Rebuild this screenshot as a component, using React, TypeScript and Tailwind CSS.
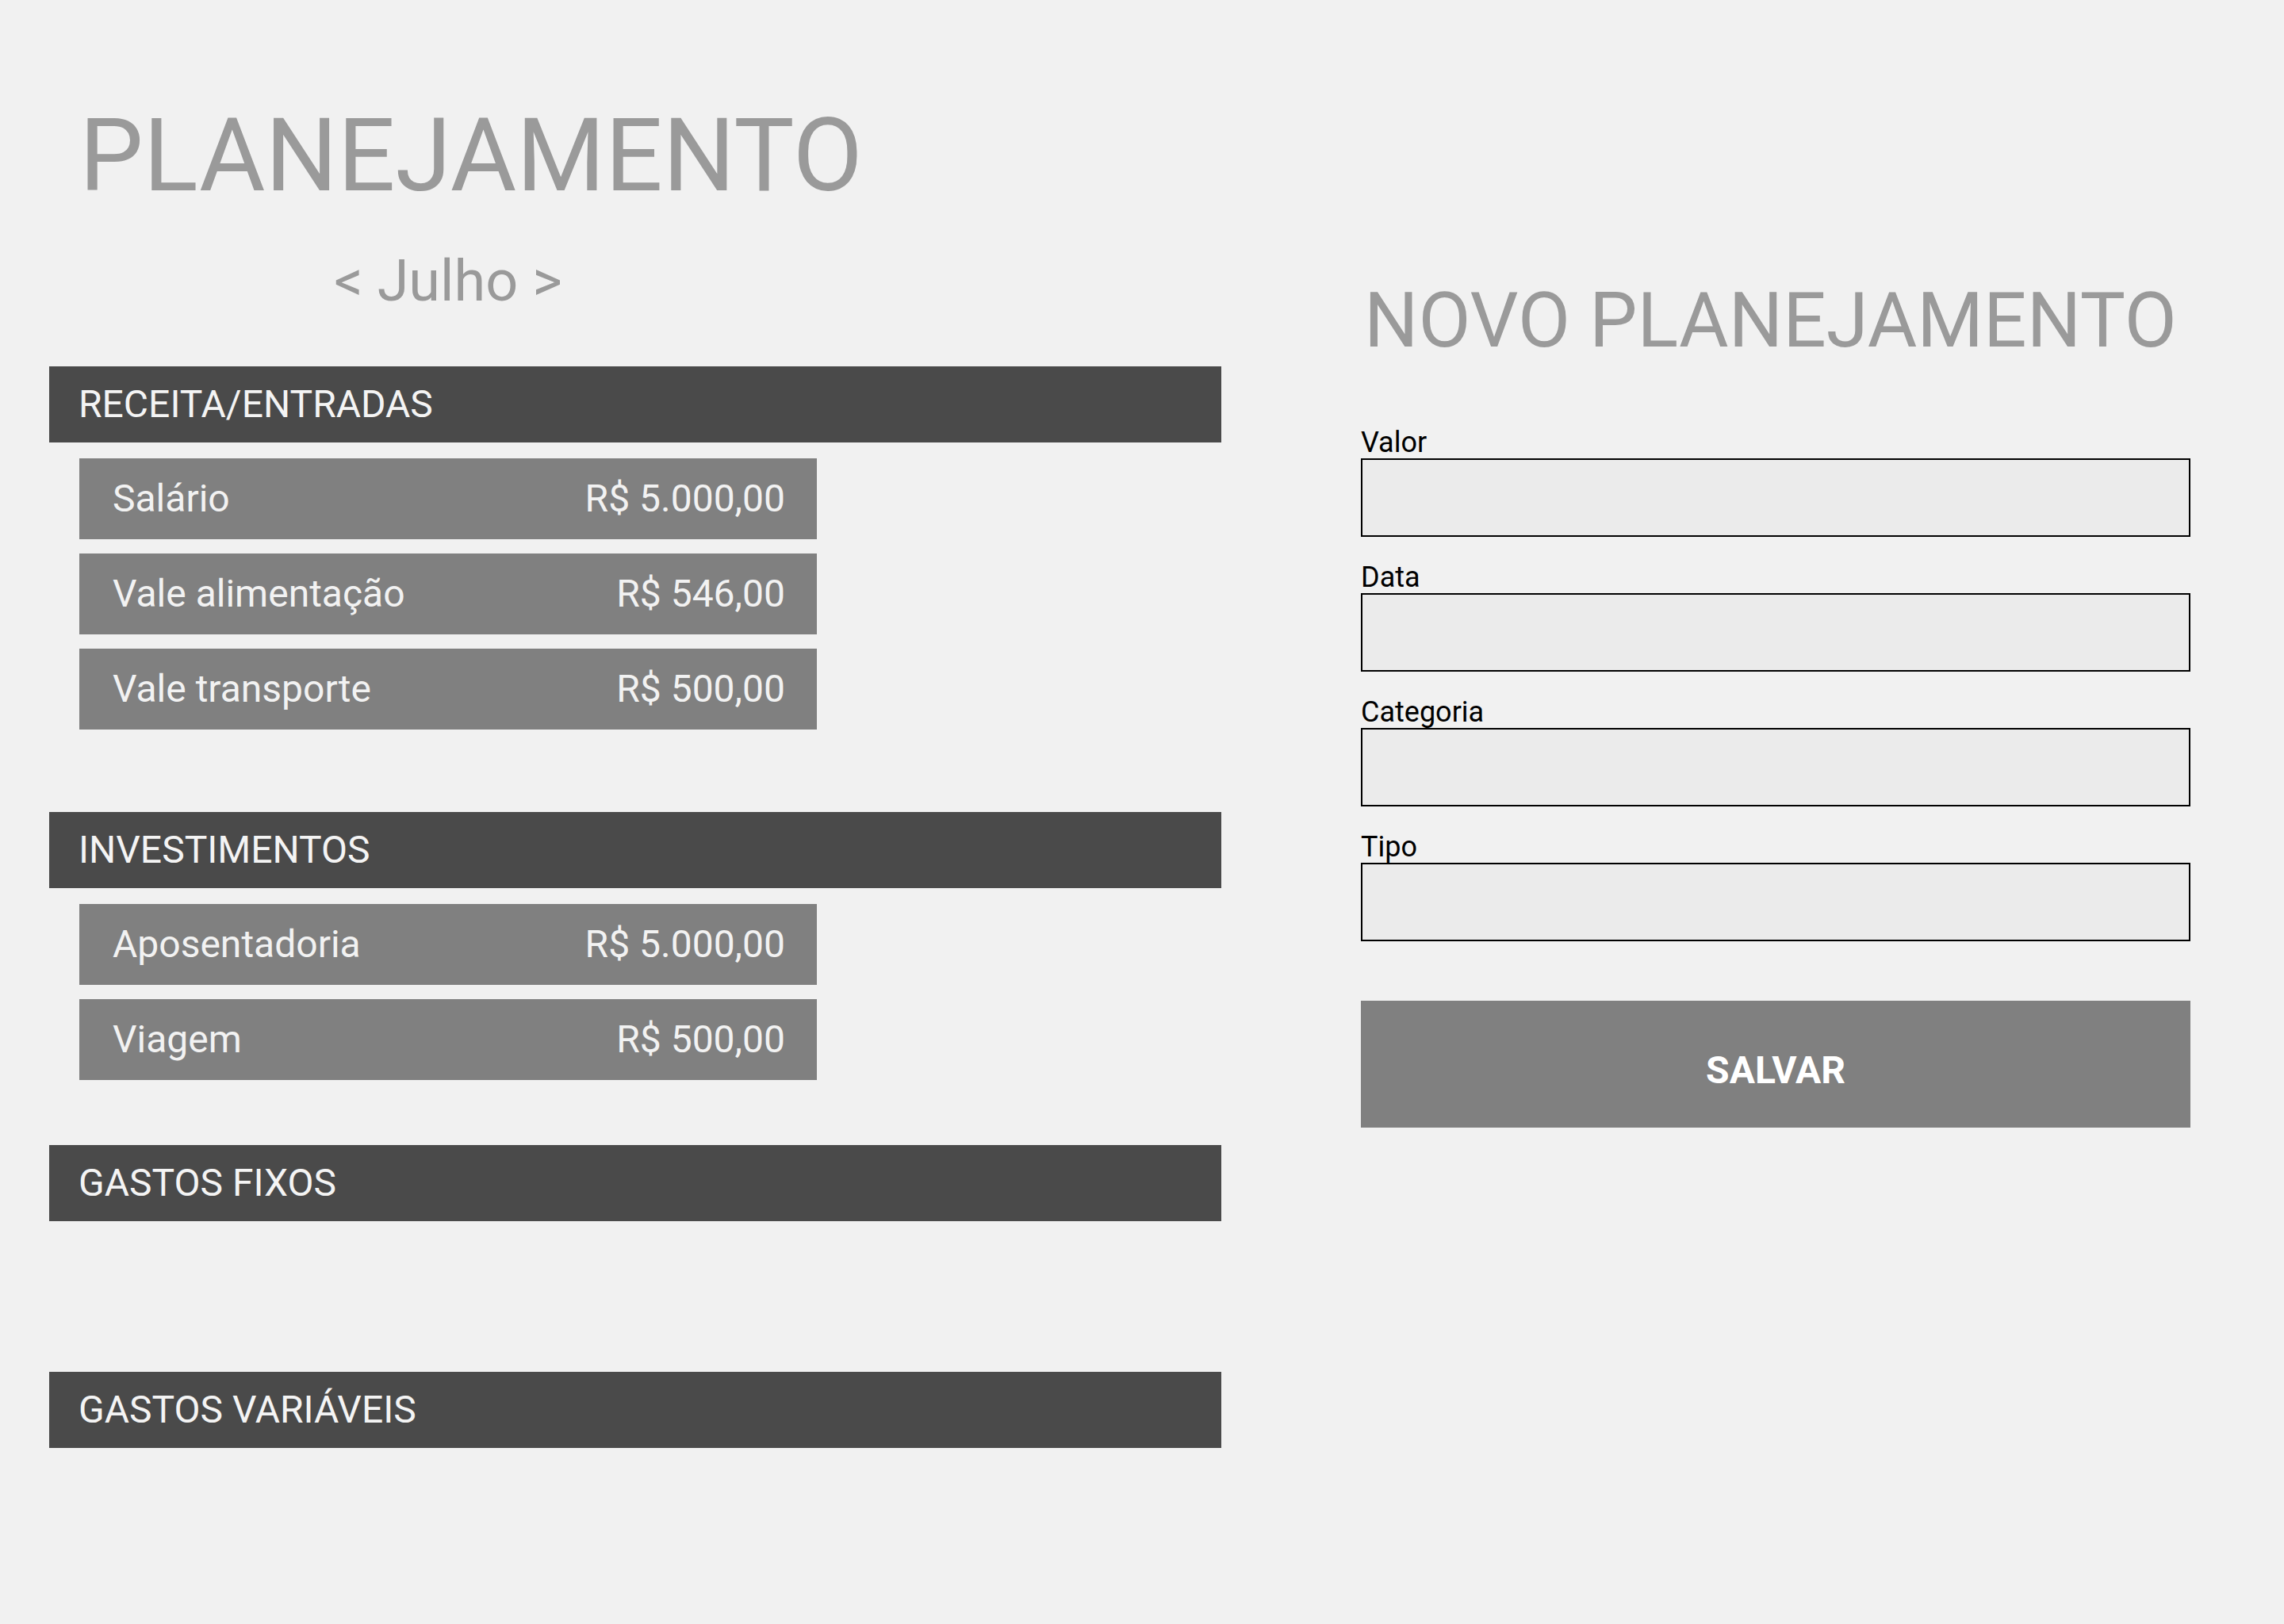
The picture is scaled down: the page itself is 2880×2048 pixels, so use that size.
import React from "react";

const Header = ({ title, className = "" }: { title: string; className?: string }) => (
  <div className={`h-[96px] bg-[#4a4a4a] flex items-center pl-[37px] ${className}`}>
    <span className="text-[48px] leading-none text-[#f4f4f4]">{title}</span>
  </div>
);

const Item = ({ label, value }: { label: string; value: string }) => (
  <div className="h-[102px] bg-[#808080] flex items-center justify-between pl-[42px] pr-[40px]">
    <span className="text-[48px] leading-none text-[#f2f2f2]">{label}</span>
    <span className="text-[48px] leading-none text-[#f2f2f2]">{value}</span>
  </div>
);

const Field = ({ label, first = false }: { label: string; first?: boolean }) => (
  <div className={`flex flex-col ${first ? "mt-[88px]" : "mt-[33px]"}`}>
    <label className="text-[36px] leading-[36px] text-black">{label}</label>
    <div className="mt-[2px] h-[99px] border-2 border-black bg-[#ebebeb]" />
  </div>
);

export default function App() {
  return (
    <div
      className="min-h-screen w-full bg-[#f1f1f1] flex"
      style={{ fontFamily: "Roboto, 'Noto Sans', sans-serif" }}
    >
      <div className="ml-[62px] w-[1478px] flex flex-col">
        <h1 className="ml-[38px] mt-[132px] text-[128px] leading-none text-[#9a9a9a] font-normal">
          PLANEJAMENTO
        </h1>
        <div className="ml-[38px] w-[930px] mt-[59px] text-center text-[72px] leading-none text-[#9a9a9a]">
          &lt; Julho &gt;
        </div>

        <Header title="RECEITA/ENTRADAS" className="mt-[71px]" />
        <div className="ml-[38px] w-[930px] mt-[20px] flex flex-col gap-[18px]">
          <Item label="Salário" value="R$ 5.000,00" />
          <Item label="Vale alimentação" value="R$ 546,00" />
          <Item label="Vale transporte" value="R$ 500,00" />
        </div>

        <Header title="INVESTIMENTOS" className="mt-[104px]" />
        <div className="ml-[38px] w-[930px] mt-[20px] flex flex-col gap-[18px]">
          <Item label="Aposentadoria" value="R$ 5.000,00" />
          <Item label="Viagem" value="R$ 500,00" />
        </div>

        <Header title="GASTOS FIXOS" className="mt-[82px]" />
        <Header title="GASTOS VARIÁVEIS" className="mt-[190px]" />
      </div>

      <div className="ml-[176px] w-[1046px] flex flex-col">
        <h2 className="ml-[4px] mt-[356px] text-[96px] leading-none text-[#9a9a9a] font-normal whitespace-nowrap">
          NOVO PLANEJAMENTO
        </h2>
        <Field label="Valor" first />
        <Field label="Data" />
        <Field label="Categoria" />
        <Field label="Tipo" />
        <button className="mt-[75px] h-[160px] bg-[#808080] flex justify-center pt-[64px]">
          <span className="text-[48px] leading-none font-bold text-white">SALVAR</span>
        </button>
      </div>
    </div>
  );
}
